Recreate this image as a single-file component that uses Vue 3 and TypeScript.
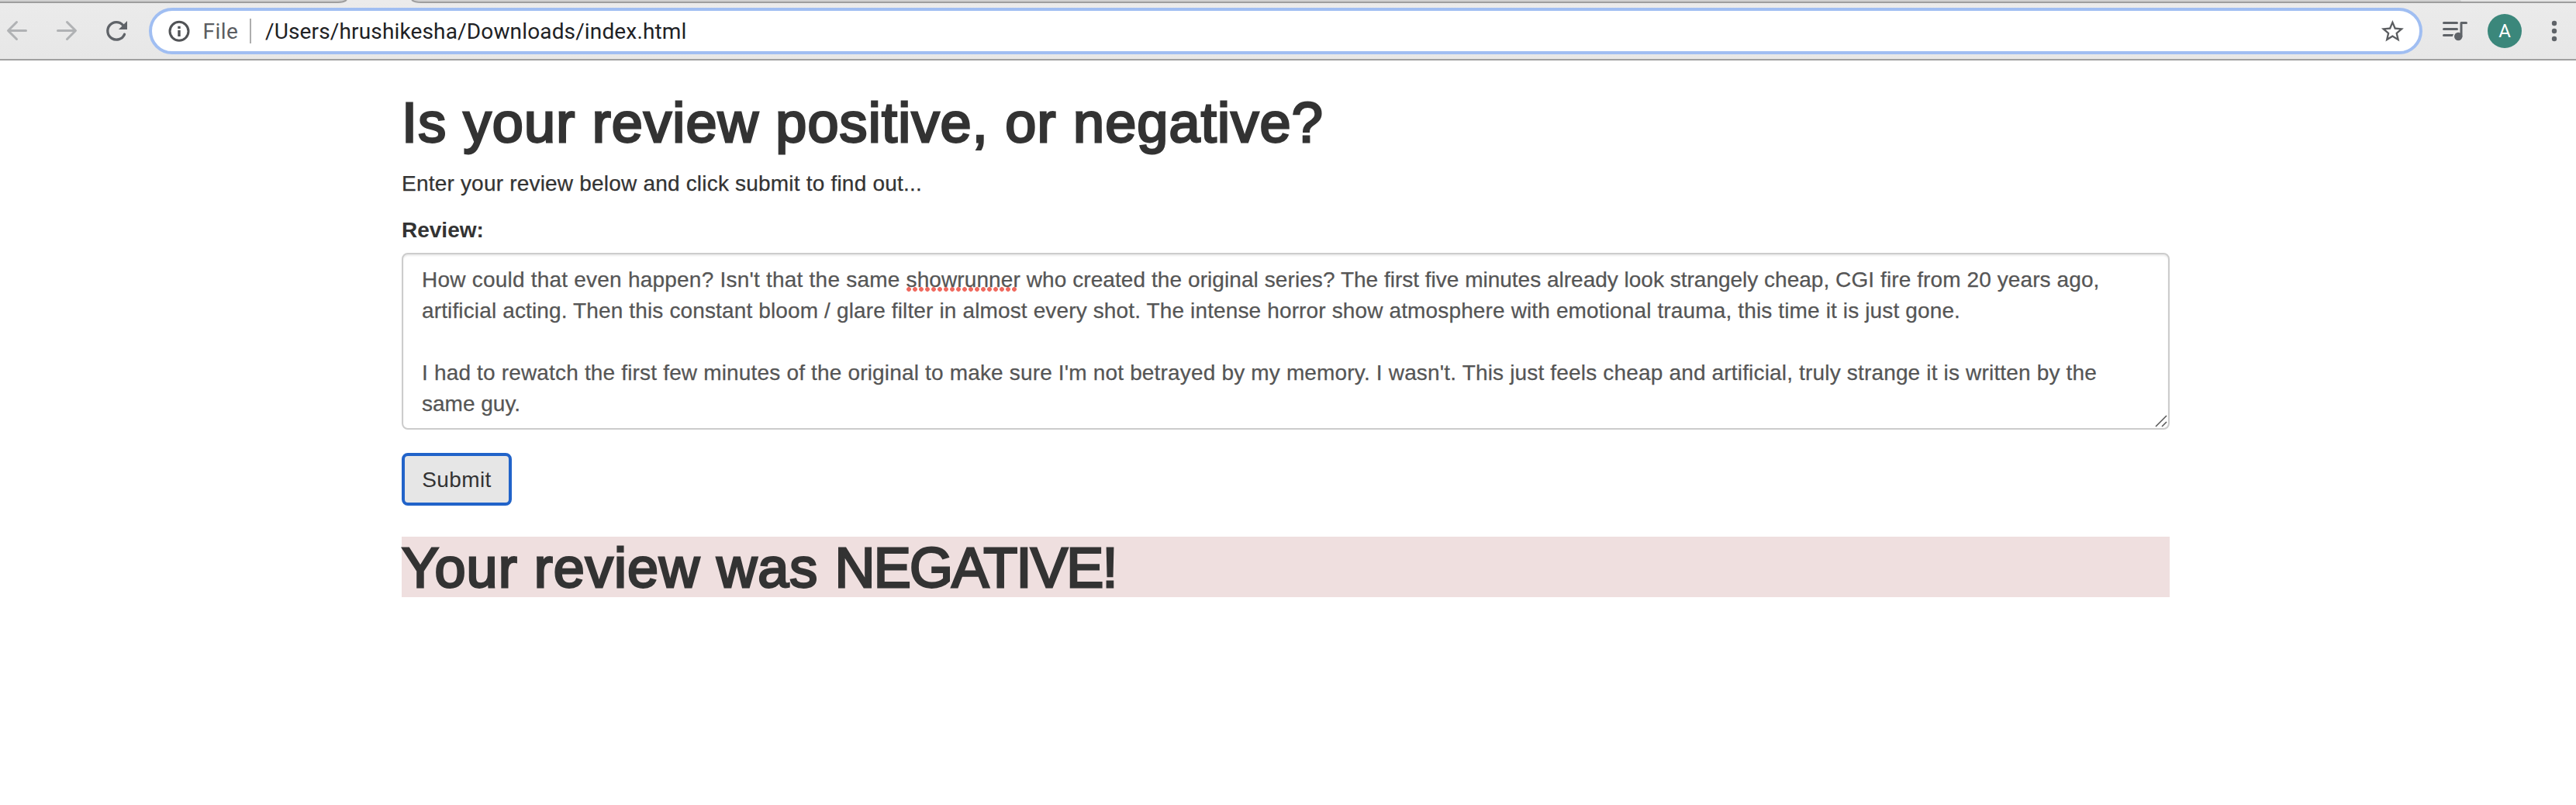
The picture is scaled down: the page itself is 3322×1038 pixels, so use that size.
<script setup lang="ts">
interface Segment {
  text: string
  spacing: number
  misspelled?: boolean
}

const lines: Segment[][] = [
  [
    { text: "How could that even happen? Isn't that the same ", spacing: 0.22 },
    { text: 'showrunner', spacing: 0.1, misspelled: true },
    { text: ' who created the original series?', spacing: 0.08 },
    { text: ' The first five minutes already look strangely cheap,', spacing: 0 },
    { text: ' CGI fire from 20 years ago,', spacing: 0.1 },
  ],
  [
    { text: 'artificial acting. Then this constant bloom / glare filter in almost every shot. The intense horror show atmosphere with emotional trauma, this time it is just gone.', spacing: 0.137 },
  ],
  [],
  [
    { text: "I had to rewatch the first few minutes of the original to make sure I'm not betrayed by my memory. I wasn't. This just feels cheap and artificial, truly strange it is written by the", spacing: 0.17 },
  ],
  [{ text: 'same guy.', spacing: 0 }],
]
</script>

<template>
  <div class="page">
    <header class="chrome">
      <svg class="tabs" width="3322" height="4" viewBox="0 0 3322 4">
        <path d="M0 0H447Q443 3 436 3H0Z" fill="#d0d0d0" />
        <path d="M531 0H3173L3175 3H543Q535 3 531 0Z" fill="#d0d0d0" />
        <path d="M3173 0H3322V3H3175Z" fill="#e4e4e4" />
        <path d="M0 3H436Q443 3 447 0M531 0Q535 3 543 3H3322" fill="none" stroke="#9e9e9e" stroke-width="2" />
      </svg>
      <div class="toolbar">
        <div class="nav">
          <svg width="40" height="40" viewBox="2 20 40 40" fill="none" stroke="#b0b2b4" stroke-width="3" stroke-linecap="round" stroke-linejoin="round">
            <path d="M33.5 39.5H11M21.5 28.5L10.5 39.5L21.5 50.5" />
          </svg>
          <svg width="40" height="40" viewBox="66 20 40 40" fill="none" stroke="#b0b2b4" stroke-width="3" stroke-linecap="round" stroke-linejoin="round">
            <path d="M74.5 39.5H97M86.5 28.5L97.5 39.5L86.5 50.5" />
          </svg>
          <svg width="40" height="40" viewBox="130 20 40 40">
            <path d="M160.5 44.3A11.3 11.3 0 1 1 158.5 32.3" fill="none" stroke="#5f6368" stroke-width="3.3" stroke-linecap="round" />
            <path d="M164 27V38H153Z" fill="#5f6368" />
          </svg>
        </div>
        <div class="omnibox">
          <svg class="info" width="28" height="28" viewBox="0 0 28 28">
            <circle cx="14" cy="14.3" r="12" fill="none" stroke="#515356" stroke-width="3" />
            <path d="M12.3 7.8H15.7V11.1H12.3ZM12.3 13.1H15.7V20.9H12.3Z" fill="#515356" />
          </svg>
          <span class="scheme">File</span>
          <i class="divider"></i>
          <span class="url">/Users/hrushikesha/Downloads/index.html</span>
          <svg class="star" width="34.8" height="34.8" viewBox="0 0 24 24">
            <path fill="#5b5d60" d="M22 9.24l-7.19-.62L12 2 9.19 8.63 2 9.24l5.46 4.73L5.82 21 12 17.27 18.18 21l-1.63-7.03L22 9.24zM12 15.4l-3.76 2.27 1-4.28-3.32-2.88 4.38-.38L12 6.1l1.71 4.04 4.38.38-3.32 2.88 1 4.28L12 15.4z" />
          </svg>
        </div>
        <svg class="media" width="36" height="28" viewBox="0 0 36 28">
          <path d="M3.5 3.5H20.5M3.5 11.5H20.5" fill="none" stroke="#5f6368" stroke-width="3" stroke-linecap="round" />
          <path d="M3.5 18H16L14.8 21H3.5A1.5 1.5 0 0 1 3.5 18Z" fill="#5f6368" />
          <path d="M26 21V3.5H32.5" fill="none" stroke="#5f6368" stroke-width="3" stroke-linecap="round" stroke-linejoin="round" />
          <circle cx="22.2" cy="21" r="5.2" fill="#5f6368" />
        </svg>
        <div class="avatar">A</div>
        <svg class="more" width="8" height="28" viewBox="0 0 8 28" fill="#5f6368">
          <circle cx="4" cy="4" r="3.2" />
          <circle cx="4" cy="14" r="3.2" />
          <circle cx="4" cy="24" r="3.2" />
        </svg>
      </div>
    </header>

    <main class="container">
      <h1 class="title">Is your review positive, or negative?</h1>
      <p class="lead">Enter your review below and click submit to find out...</p>
      <div class="label">Review:</div>
      <div class="textarea">
        <div v-for="(line, i) in lines" :key="i" class="line"><span v-for="(part, j) in line" :key="j" :class="{ misspelled: part.misspelled }" :style="{ letterSpacing: part.spacing + 'px' }">{{ part.text }}</span></div>
        <svg class="grip" width="16" height="16" viewBox="0 0 16 16">
          <path d="M1 15L15 1M9 15L15 9" stroke="#555" stroke-width="1.5" />
        </svg>
      </div>
      <button class="submit" type="button">Submit</button>
      <h1 class="result">Your review was <span class="verdict">NEGATIVE!</span></h1>
    </main>
  </div>
</template>

<style>
body {
  background: #fff;
}
</style>

<style scoped>
.page {
  width: 3322px;
  height: 1038px;
  overflow: hidden;
  background: #fff;
  color: #333;
  font: 28px/40px "Liberation Sans", Arial, sans-serif;
}
.chrome {
  box-sizing: border-box;
  height: 78px;
  border-bottom: 2px solid #a0a0a0;
  background: linear-gradient(#ebebeb, #e7e7e7);
}
.tabs {
  display: block;
}
.toolbar {
  display: flex;
  align-items: center;
  height: 72px;
  padding-left: 2px;
}
.nav {
  display: flex;
  gap: 24px;
  margin-right: 22px;
}
.omnibox {
  box-sizing: border-box;
  display: flex;
  align-items: center;
  width: 2932px;
  height: 60px;
  padding: 0 17px 0 20.5px;
  border: 4px solid #a0bef2;
  border-radius: 30px;
  background: #fff;
  font-family: Roboto, sans-serif;
  white-space: nowrap;
}
.info {
  margin-right: 17px;
}
.scheme,
.url {
  padding-top: 2px;
}
.scheme {
  width: 60.5px;
  color: #5b5d61;
  letter-spacing: 0.45px;
}
.divider {
  width: 2px;
  height: 32px;
  margin-right: 18px;
  background: #adadad;
}
.url {
  color: #202124;
  letter-spacing: 0.147px;
}
.star {
  margin-left: auto;
}
.media {
  margin-left: 24px;
}
.avatar {
  width: 44px;
  height: 44px;
  margin-left: 24px;
  border-radius: 50%;
  background: #3b877b;
  color: #fff;
  font: 24px/45px Roboto, sans-serif;
  text-align: center;
}
.more {
  margin-left: 38px;
}
.container {
  width: 2280px;
  margin-left: 518px;
  padding-top: 40px;
}
.title,
.result {
  margin: 0;
  font-size: 72px;
  font-weight: 400;
  -webkit-text-stroke: 2.8px #333;
  white-space: nowrap;
}
.title {
  height: 78px;
  line-height: 80px;
  letter-spacing: 1.2px;
}
.lead {
  margin: 21px 0 20px;
  letter-spacing: 0.2px;
  -webkit-text-stroke: 0.25px #333;
}
.label {
  margin-bottom: 9px;
  font-weight: 700;
}
.textarea {
  position: relative;
  box-sizing: border-box;
  height: 228px;
  padding: 13px 24px 11px;
  border: 2px solid #ccc;
  border-radius: 8px;
  box-shadow: inset 0 2px 2px rgba(0, 0, 0, 0.075);
  color: #555;
  -webkit-text-stroke: 0.25px #555;
}
.line {
  height: 40px;
  white-space: pre;
}
.misspelled {
  position: relative;
}
.misspelled::after {
  content: "";
  position: absolute;
  left: 0;
  bottom: 0;
  width: 142px;
  height: 6px;
  background: radial-gradient(circle at 3px 3px, #f0695e 2.5px, transparent 3.2px) 0 0 / 8px 6px repeat-x;
}
.grip {
  position: absolute;
  right: 1px;
  bottom: 1px;
}
.submit {
  display: block;
  box-sizing: border-box;
  width: 142px;
  height: 68px;
  margin: 30px 0 40px;
  padding: 2px 0 0;
  border: 4px solid #2163c9;
  border-radius: 8px;
  background: #e6e6e6;
  color: #333;
  font: inherit;
  letter-spacing: 0.4px;
}
.result {
  box-sizing: border-box;
  height: 78px;
  line-height: 80px;
  background: #efdfdf;
  letter-spacing: 1.05px;
}
.verdict {
  letter-spacing: -1.7px;
}
</style>
